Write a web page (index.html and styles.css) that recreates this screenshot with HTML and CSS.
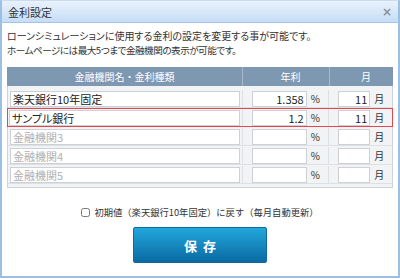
FILE: index.html
```html
<!DOCTYPE html>
<html lang="ja">
<head>
    <meta charset="UTF-8">
    <title>金利設定</title>
    <link rel="stylesheet" href="styles.css">
</head>
<body>
    <div class="dialog">
        <div class="titlebar">
            <span class="title">金利設定</span>
            <span class="close">×</span>
        </div>

        <div class="content">
            <p class="lead">ローンシミュレーションに使用する金利の設定を変更する事が可能です。<br><span class="second">ホームページには最大5つまで金融機関の表示が可能です。</span></p>

            <div class="rate-table">
                <div class="row head">
                    <div class="cell name">金融機関名・金利種類</div>
                    <div class="cell rate">年利</div>
                    <div class="cell month">月</div>
                </div>
                <div class="rows">
                    <div class="row">
                        <div class="cell name"><input type="text" value="楽天銀行10年固定"></div>
                        <div class="cell rate"><input type="text" class="num" value="1.358"><span class="unit">%</span></div>
                        <div class="cell month"><input type="text" class="num" value="11"><span class="unit">月</span></div>
                    </div>
                    <div class="row active">
                        <div class="cell name"><input type="text" value="サンプル銀行"></div>
                        <div class="cell rate"><input type="text" class="num" value="1.2"><span class="unit">%</span></div>
                        <div class="cell month"><input type="text" class="num" value="11"><span class="unit">月</span></div>
                    </div>
                    <div class="row">
                        <div class="cell name"><input type="text" placeholder="金融機関3"></div>
                        <div class="cell rate"><input type="text" class="num"><span class="unit">%</span></div>
                        <div class="cell month"><input type="text" class="num"><span class="unit">月</span></div>
                    </div>
                    <div class="row">
                        <div class="cell name"><input type="text" placeholder="金融機関4"></div>
                        <div class="cell rate"><input type="text" class="num"><span class="unit">%</span></div>
                        <div class="cell month"><input type="text" class="num"><span class="unit">月</span></div>
                    </div>
                    <div class="row">
                        <div class="cell name"><input type="text" placeholder="金融機関5"></div>
                        <div class="cell rate"><input type="text" class="num"><span class="unit">%</span></div>
                        <div class="cell month"><input type="text" class="num"><span class="unit">月</span></div>
                    </div>
                </div>
            </div>

            <label class="reset"><input type="checkbox">初期値（楽天銀行10年固定）に戻す（毎月自動更新）</label>

            <div class="actions">
                <button class="save">保存</button>
            </div>
        </div>
    </div>
</body>
</html>
```

FILE: styles.css
```css
body {
    margin: 0;
    background-color: #ffffff;
    font-family: "Noto Sans CJK JP", "Noto Sans", sans-serif;
    font-feature-settings: "palt";
    color: #333333;
}

.dialog {
    width: 400px;
    height: 278px;
    box-sizing: border-box;
    border: 2px solid #9cbfe4;
    border-top: 1px solid #c9dcf1;
    background-color: #ffffff;
}

.titlebar {
    display: flex;
    justify-content: space-between;
    align-items: center;
    height: 21px;
    padding: 0 6px 0 6px;
    background: linear-gradient(#e9f2fc, #c6ddf6);
    border-bottom: 1px solid #a4c4e8;
}

.title {
    font-size: 11px;
    color: #333333;
}

.close {
    font-size: 12px;
    font-weight: bold;
    color: #8a9099;
    font-family: "DejaVu Sans", sans-serif;
}

.content {
    padding: 6px 5px 0 5px;
}

.lead {
    margin: 0;
    font-size: 10px;
    line-height: 14px;
}

.lead .second {
    font-size: 9.6px;
    letter-spacing: -0.5px;
}

.rate-table {
    margin-top: 10px;
    border: 1px solid #ccd3da;
    border-top: none;
    background-color: #f2f3f4;
}

.row {
    display: flex;
    align-items: center;
    height: 19px;
    box-sizing: border-box;
    border: 1px solid transparent;
    border-bottom-color: #dde0e4;
    margin: 0 -1px;
}

.row.head {
    height: 19px;
    margin: 0 -1px;
    border: none;
    background-color: #7f98b2;
    color: #ffffff;
    font-size: 10px;
    font-feature-settings: normal;
}

.row.head .cell {
    justify-content: center;
    height: 100%;
    border-right: 1px solid #a7b8ca;
}

.row.head .cell:last-child {
    border-right: none;
}

.rows {
    padding: 3px 0;
}

.row.active {
    border: 1px solid #e2474d;
}

.cell {
    display: flex;
    align-items: center;
    box-sizing: border-box;
    height: 100%;
}

.cell.name {
    width: 236px;
    padding: 0 2px 0 2px;
    border-right: 1px solid #dde0e4;
}

.cell.rate {
    width: 87px;
    padding-left: 9px;
    border-right: 1px solid #dde0e4;
}

.cell.month {
    width: 63px;
    padding-left: 9px;
}

.row.active .cell.name {
    padding-left: 1px;
}

input[type="text"] {
    box-sizing: border-box;
    height: 16px;
    margin: 0;
    padding: 0 2px;
    border: 1px solid #cdd1d5;
    background-color: #ffffff;
    font-family: "Noto Sans CJK JP", "Noto Sans", sans-serif;
    font-feature-settings: "palt";
    font-size: 11px;
    color: #222222;
    outline: none;
}

.cell.name input {
    width: 100%;
}

.cell.rate input {
    width: 55px;
}

.cell.month input {
    width: 32px;
}

input.num {
    text-align: right;
}

input::placeholder {
    color: #b0b0b0;
}

.unit {
    margin-left: 4px;
    font-size: 10px;
    color: #333333;
}

.reset {
    display: flex;
    justify-content: center;
    align-items: center;
    margin-top: 17px;
    height: 14px;
    font-size: 9.3px;
    font-feature-settings: normal;
}

.reset input {
    width: 9px;
    height: 9px;
    margin: 0 4px 0 0;
}

.actions {
    display: flex;
    justify-content: center;
    margin-top: 8px;
}

.save {
    width: 134px;
    height: 36px;
    border: 1px solid #0c6a9d;
    border-radius: 2px;
    background: linear-gradient(#22a7dc, #0a6aa2);
    color: #ffffff;
    font-family: "Noto Sans CJK JP", sans-serif;
    font-size: 13px;
    font-weight: bold;
    letter-spacing: 6px;
    text-indent: 6px;
    cursor: pointer;
}
```
